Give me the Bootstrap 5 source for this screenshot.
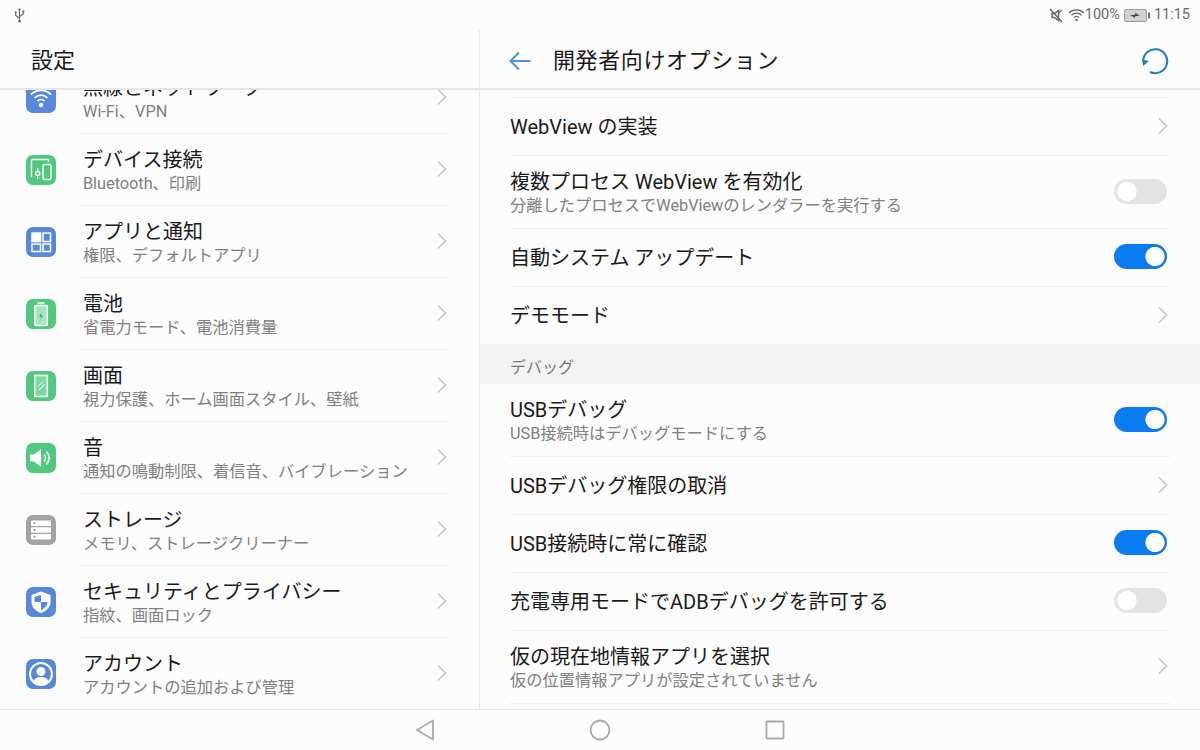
<!DOCTYPE html>
<html lang="ja">
<head>
<meta charset="utf-8">
<title>設定</title>
<link href="https://cdn.jsdelivr.net/npm/bootstrap@5.3.0/dist/css/bootstrap.min.css" rel="stylesheet">
<style>
html,body{height:100%;overflow:hidden;background:#fcfcfc}
body{font-family:Roboto,"Noto Sans CJK JP",sans-serif;color:#1a1a1a}
.shell{width:1200px;height:750px}
.statusline{height:30px;padding:0 10px 0 14px;color:#6b6b6b;font-size:14.5px;line-height:30px}
.statusline svg{display:block}
.panes{height:679px;min-height:0}
.pane-left{width:480px;border-right:1px solid #e9e9e9}
.pane-right{width:720px}
.appbar{height:60px;flex:none;border-bottom:2px solid #e5e5e5;font-size:22px;padding-top:3px}
.appbar-left{padding-left:31px}
.appbar-right{padding-left:29px;padding-right:31px}
.appbar-right .ttl{margin-left:21px;letter-spacing:.6px}
.scrollarea{flex:1;min-height:0;overflow:hidden}
.set-list{margin-top:-28px}
.set-row{height:72px;padding:0 30px 0 26px;background:transparent;border:0;border-radius:0}
.tile{width:30px;height:30px;border-radius:7px;flex:none}
.tile svg{display:block;width:30px;height:30px}
.tile-blue{background:#5888d8}
.tile-green{background:#50c87e}
.tile-gray{background:#a2a2a2}
.set-body{margin-left:24px;height:72px;border-bottom:1px solid #efefef;padding-right:3px}
.set-row:last-child .set-body{border-bottom:0}
.twoline{padding-top:4px}
.set-body .twoline{padding-left:3px}
.ttl-main{font-size:20px;line-height:24px;color:#1a1a1a}
.ttl-sub{font-size:16.25px;line-height:24px;color:#808080}
.chev{width:11px;height:18px;flex:none;margin-top:-2px}
.set-body .chev{margin-right:-1px}
.opt-list{padding-top:7px}
.opt-row{padding:0 30px;background:transparent;border:0;border-radius:0}
.opt-inner{border-top:1px solid #efefef;height:58px}
.opt-inner .chev{margin-right:2px}
.opt-tall .opt-inner{height:73px}
.opt-tall .opt-inner.no-rule{border-top:0;height:72px}
.sect{height:40px;background:#f3f3f3;padding:8px 30px 0;font-size:16px;color:#777}
.form-switch .form-check-input.tgl{width:53px;height:25px;margin:0;float:none;border:0;box-shadow:none;background-color:#e3e3e3;background-image:radial-gradient(circle 10px at 13px 50%,#fff 92%,transparent 100%);background-position:0 0;background-size:auto}
.form-switch .form-check-input.tgl:checked{background-color:#0a7cf3;background-image:radial-gradient(circle 10px at 41px 50%,#fff 92%,transparent 100%)}
.form-switch.tgl-wrap{padding:0;margin-right:3px;min-height:0;display:flex}
.navline{height:41px;border-top:1px solid #e4e4e4;background:#fcfcfc}
.navcell{width:175px}
.navcell svg{display:block}
</style>
</head>
<body>
<svg width="0" height="0" class="d-none"><defs>
<symbol id="chv" viewBox="0 0 11 18"><path d="M2 1.500 9.500 9 2 16.500" fill="none" stroke="#c8c8c8" stroke-width="1.600"/></symbol>
</defs></svg>
<div class="shell d-flex flex-column">
  <div class="statusline d-flex align-items-center">
    <svg width="11" height="15" viewBox="0 0 11 15" fill="none" stroke="#6b6b6b" stroke-width="1.200"><path d="M5.500 1v13M1.700 5v2.400l3.800 2.800M9.300 4v2l-3.800 2.400"/><path d="M5.500 0 4 2h3z" fill="#6b6b6b" stroke="none"/><circle cx="1.700" cy="4.300" r="1.100" fill="#6b6b6b" stroke="none"/><rect x="8.300" y="2.400" width="2" height="2" fill="#6b6b6b" stroke="none"/><circle cx="5.500" cy="13.300" r="1.300" fill="#6b6b6b" stroke="none"/></svg>
    <div class="ms-auto d-flex align-items-center">
      <svg width="15" height="15" viewBox="0 0 15 15" fill="none" stroke="#666" stroke-width="1.500"><path d="M3 5.500v4h2.500l4 3v-10l-4 3z"/><path d="M1 1l12 13"/><path d="M9.500 5l3.500-3" stroke-width="1.200"/></svg>
      <svg class="ms-1" width="17" height="14" viewBox="0 0 17 14" fill="none" stroke="#666" stroke-width="1.200"><path d="M1 5a10.500 10.500 0 0 1 15 0M3.400 7.400a7 7 0 0 1 10.200 0M5.800 9.700a3.600 3.600 0 0 1 5.400 0"/><circle cx="8.500" cy="12" r="1.200" fill="#666" stroke="none"/></svg>
      <span>100%</span>
      <svg class="ms-1" width="26" height="13" viewBox="0 0 26 13"><rect x=".5" y=".5" width="22" height="12" rx="1.500" fill="#d2d2d2" stroke="#9a9a9a"/><rect x="24" y="3.500" width="2" height="6" fill="#777"/><path d="M6 6h5V4l5 2.500-5 .8V9z" fill="#444"/></svg>
      <span class="ms-1">11:15</span>
    </div>
  </div>
  <div class="panes d-flex">
    <section class="pane-left d-flex flex-column">
      <div class="appbar appbar-left d-flex align-items-center"><span>設定</span></div>
      <div class="scrollarea">
        <div class="list-group list-group-flush set-list">
          <div class="list-group-item set-row d-flex align-items-center">
            <div class="tile tile-blue"><svg viewBox="0 0 30 30" fill="none" stroke="#fff" stroke-width="1.800"><path d="M5 11.500a14 14 0 0 1 20 0M8.500 15a9 9 0 0 1 13 0M11.500 18a5 5 0 0 1 7 0"/><circle cx="15" cy="22" r="2.200" fill="#fff" stroke="none"/></svg></div>
            <div class="set-body flex-grow-1 d-flex align-items-center justify-content-between"><div class="twoline"><div class="ttl-main">無線とネットワーク</div><div class="ttl-sub">Wi-Fi、VPN</div></div><svg class="chev"><use href="#chv"/></svg></div>
          </div>
          <div class="list-group-item set-row d-flex align-items-center">
            <div class="tile tile-green"><svg viewBox="0 0 30 30" fill="none" stroke="#fff" stroke-width="1.400"><path d="M5.500 22V6a1.500 1.500 0 0 1 1.500-1.500H22.500V7"/><rect x="17" y="9.500" width="8" height="15" rx="1.500"/><path d="M11.700 13v3.200M11.700 21v3"/><circle cx="11.700" cy="18.500" r="2"/></svg></div>
            <div class="set-body flex-grow-1 d-flex align-items-center justify-content-between"><div class="twoline"><div class="ttl-main">デバイス接続</div><div class="ttl-sub">Bluetooth、印刷</div></div><svg class="chev"><use href="#chv"/></svg></div>
          </div>
          <div class="list-group-item set-row d-flex align-items-center">
            <div class="tile tile-blue"><svg viewBox="0 0 30 30" fill="none" stroke="#fff" stroke-width="1.500"><rect x="6" y="6" width="8.500" height="8.500" fill="#fff"/><rect x="17" y="6" width="7.500" height="8.500"/><rect x="6" y="17" width="8.500" height="7.500"/><rect x="17" y="17" width="7.500" height="7.500"/></svg></div>
            <div class="set-body flex-grow-1 d-flex align-items-center justify-content-between"><div class="twoline"><div class="ttl-main">アプリと通知</div><div class="ttl-sub">権限、デフォルトアプリ</div></div><svg class="chev"><use href="#chv"/></svg></div>
          </div>
          <div class="list-group-item set-row d-flex align-items-center">
            <div class="tile tile-green"><svg viewBox="0 0 30 30" fill="none" stroke="#fff" stroke-width="1.500"><rect x="8.800" y="6.500" width="12.500" height="20" rx="1" fill="#a5e6bf"/><path d="M11.500 4h7"/><path d="M15.800 13l-2.600 4.500h2l-1 3.500 2.600-4.500h-2z" fill="#2f9a58" stroke="none"/></svg></div>
            <div class="set-body flex-grow-1 d-flex align-items-center justify-content-between"><div class="twoline"><div class="ttl-main">電池</div><div class="ttl-sub">省電力モード、電池消費量</div></div><svg class="chev"><use href="#chv"/></svg></div>
          </div>
          <div class="list-group-item set-row d-flex align-items-center">
            <div class="tile tile-green"><svg viewBox="0 0 30 30" fill="none" stroke="#fff" stroke-width="1.600"><rect x="8.800" y="4.500" width="12.500" height="21" fill="#7bd8a0"/><path d="M12 15.500l5-5M13 19l5.500-5.500" stroke-width="1"/></svg></div>
            <div class="set-body flex-grow-1 d-flex align-items-center justify-content-between"><div class="twoline"><div class="ttl-main">画面</div><div class="ttl-sub">視力保護、ホーム画面スタイル、壁紙</div></div><svg class="chev"><use href="#chv"/></svg></div>
          </div>
          <div class="list-group-item set-row d-flex align-items-center">
            <div class="tile tile-green"><svg viewBox="0 0 30 30" fill="none" stroke="#fff" stroke-width="1.700"><path d="M4 11.500v7h4l7 5.500V6l-7 5.500z" fill="#fff" stroke="none"/><path d="M18 11.500a5 5 0 0 1 0 7M20.500 8.500a9.500 9.500 0 0 1 0 13"/></svg></div>
            <div class="set-body flex-grow-1 d-flex align-items-center justify-content-between"><div class="twoline"><div class="ttl-main">音</div><div class="ttl-sub">通知の鳴動制限、着信音、バイブレーション</div></div><svg class="chev"><use href="#chv"/></svg></div>
          </div>
          <div class="list-group-item set-row d-flex align-items-center">
            <div class="tile tile-gray"><svg viewBox="0 0 30 30"><rect x="5" y="5.500" width="20" height="5.500" rx="1" fill="#fff"/><rect x="5" y="12.300" width="20" height="5.500" rx="1" fill="#fff"/><rect x="5" y="19" width="20" height="5.500" rx="1" fill="#fff"/><circle cx="8.500" cy="8.200" r="1" fill="#888"/><circle cx="8.500" cy="15" r="1" fill="#888"/><circle cx="8.500" cy="21.800" r="1" fill="#888"/></svg></div>
            <div class="set-body flex-grow-1 d-flex align-items-center justify-content-between"><div class="twoline"><div class="ttl-main">ストレージ</div><div class="ttl-sub">メモリ、ストレージクリーナー</div></div><svg class="chev"><use href="#chv"/></svg></div>
          </div>
          <div class="list-group-item set-row d-flex align-items-center">
            <div class="tile tile-blue"><svg viewBox="0 0 30 30"><path d="M15 4.500 24.500 8v7c0 5.500-4 9-9.500 11-5.500-2-9.500-5.500-9.500-11V8z" fill="#fff"/><path d="M15 8v7H8.500V10zM15 15h6.500c0 4-3 6.500-6.500 8z" fill="#5888d8"/></svg></div>
            <div class="set-body flex-grow-1 d-flex align-items-center justify-content-between"><div class="twoline"><div class="ttl-main">セキュリティとプライバシー</div><div class="ttl-sub">指紋、画面ロック</div></div><svg class="chev"><use href="#chv"/></svg></div>
          </div>
          <div class="list-group-item set-row d-flex align-items-center">
            <div class="tile tile-blue"><svg viewBox="0 0 30 30"><circle cx="15" cy="15" r="11" fill="none" stroke="#fff" stroke-width="2"/><circle cx="15" cy="12.500" r="4.500" fill="#fff"/><path d="M7.500 22.500c1-3.500 4-4.500 7.500-4.500s6.500 1 7.500 4.500A10.500 10.500 0 0 1 15 25.500a10.500 10.500 0 0 1-7.500-3z" fill="#fff"/></svg></div>
            <div class="set-body flex-grow-1 d-flex align-items-center justify-content-between"><div class="twoline"><div class="ttl-main">アカウント</div><div class="ttl-sub">アカウントの追加および管理</div></div><svg class="chev"><use href="#chv"/></svg></div>
          </div>
        </div>
      </div>
    </section>
    <section class="pane-right d-flex flex-column">
      <div class="appbar appbar-right d-flex align-items-center">
        <svg width="23" height="20" viewBox="0 0 23 20" fill="none" stroke="#4a94d2" stroke-width="2"><path d="M21.500 10H1.500M10 1.500 1.500 10l8.500 8.500"/></svg>
        <span class="ttl">開発者向けオプション</span>
        <svg class="ms-auto" width="28" height="28" viewBox="0 0 28 28" fill="none" stroke="#1f7cc0" stroke-width="2"><path d="M2.200 14A12 12 0 1 1 9 25"/><path d="M2.300 19 .8 12.500 7.800 14z" fill="#1f7cc0" stroke="none"/></svg>
      </div>
      <div class="scrollarea">
        <div class="opt-list">
          <div class="opt-row"><div class="opt-inner d-flex align-items-center justify-content-between"><div class="ttl-main">WebView の実装</div><svg class="chev"><use href="#chv"/></svg></div></div>
          <div class="opt-row opt-tall"><div class="opt-inner d-flex align-items-center justify-content-between"><div class="twoline"><div class="ttl-main">複数プロセス WebView を有効化</div><div class="ttl-sub">分離したプロセスでWebViewのレンダラーを実行する</div></div><div class="form-check form-switch tgl-wrap"><input class="form-check-input tgl" type="checkbox" role="switch" aria-label="複数プロセス WebView を有効化"></div></div></div>
          <div class="opt-row"><div class="opt-inner d-flex align-items-center justify-content-between"><div class="ttl-main">自動システム アップデート</div><div class="form-check form-switch tgl-wrap"><input class="form-check-input tgl" type="checkbox" role="switch" checked aria-label="自動システム アップデート"></div></div></div>
          <div class="opt-row"><div class="opt-inner d-flex align-items-center justify-content-between"><div class="ttl-main">デモモード</div><svg class="chev"><use href="#chv"/></svg></div></div>
          <div class="sect d-flex align-items-center">デバッグ</div>
          <div class="opt-row opt-tall"><div class="opt-inner no-rule d-flex align-items-center justify-content-between"><div class="twoline"><div class="ttl-main">USBデバッグ</div><div class="ttl-sub">USB接続時はデバッグモードにする</div></div><div class="form-check form-switch tgl-wrap"><input class="form-check-input tgl" type="checkbox" role="switch" checked aria-label="USBデバッグ"></div></div></div>
          <div class="opt-row"><div class="opt-inner d-flex align-items-center justify-content-between"><div class="ttl-main">USBデバッグ権限の取消</div><svg class="chev"><use href="#chv"/></svg></div></div>
          <div class="opt-row"><div class="opt-inner d-flex align-items-center justify-content-between"><div class="ttl-main">USB接続時に常に確認</div><div class="form-check form-switch tgl-wrap"><input class="form-check-input tgl" type="checkbox" role="switch" checked aria-label="USB接続時に常に確認"></div></div></div>
          <div class="opt-row"><div class="opt-inner d-flex align-items-center justify-content-between"><div class="ttl-main">充電専用モードでADBデバッグを許可する</div><div class="form-check form-switch tgl-wrap"><input class="form-check-input tgl" type="checkbox" role="switch" aria-label="充電専用モードでADBデバッグを許可する"></div></div></div>
          <div class="opt-row opt-tall"><div class="opt-inner d-flex align-items-center justify-content-between"><div class="twoline"><div class="ttl-main">仮の現在地情報アプリを選択</div><div class="ttl-sub">仮の位置情報アプリが設定されていません</div></div><svg class="chev"><use href="#chv"/></svg></div></div>
          <div class="opt-row"><div class="opt-inner"></div></div>
        </div>
      </div>
    </section>
  </div>
  <div class="navline d-flex justify-content-center align-items-center">
    <div class="navcell d-flex justify-content-center"><svg width="20" height="22" viewBox="0 0 20 22" fill="none" stroke="#aaa" stroke-width="1.800" stroke-linejoin="round"><path d="M18 1.500v19L2 11z"/></svg></div>
    <div class="navcell d-flex justify-content-center"><svg width="22" height="22" viewBox="0 0 22 22" fill="none" stroke="#aaa" stroke-width="1.800"><circle cx="11" cy="11" r="9.500"/></svg></div>
    <div class="navcell d-flex justify-content-center"><svg width="20" height="20" viewBox="0 0 20 20" fill="none" stroke="#aaa" stroke-width="1.800" stroke-linejoin="round"><rect x="1.500" y="1.500" width="17" height="17" rx=".5"/></svg></div>
  </div>
</div>
<script src="https://cdn.jsdelivr.net/npm/bootstrap@5.3.0/dist/js/bootstrap.bundle.min.js"></script>
</body>
</html>
